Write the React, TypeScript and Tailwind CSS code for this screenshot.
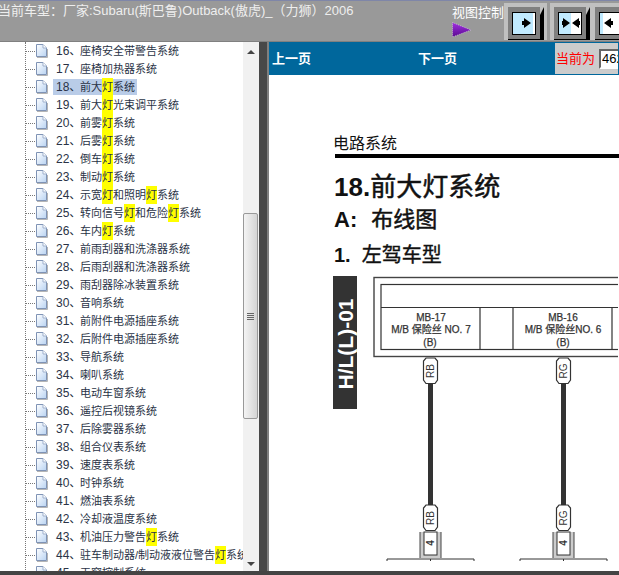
const cjk = "font-['Liberation_Sans','Noto_Sans_CJK_SC',sans-serif]";

const rows: [string, string][] = [
  ["16", "座椅安全带警告系统"],
  ["17", "座椅加热器系统"],
  ["18", "前大灯系统"],
  ["19", "前大灯光束调平系统"],
  ["20", "前雾灯系统"],
  ["21", "后雾灯系统"],
  ["22", "倒车灯系统"],
  ["23", "制动灯系统"],
  ["24", "示宽灯和照明灯系统"],
  ["25", "转向信号灯和危险灯系统"],
  ["26", "车内灯系统"],
  ["27", "前雨刮器和洗涤器系统"],
  ["28", "后雨刮器和洗涤器系统"],
  ["29", "雨刮器除冰装置系统"],
  ["30", "音响系统"],
  ["31", "前附件电源插座系统"],
  ["32", "后附件电源插座系统"],
  ["33", "导航系统"],
  ["34", "喇叭系统"],
  ["35", "电动车窗系统"],
  ["36", "遥控后视镜系统"],
  ["37", "后除雾器系统"],
  ["38", "组合仪表系统"],
  ["39", "速度表系统"],
  ["40", "时钟系统"],
  ["41", "燃油表系统"],
  ["42", "冷却液温度系统"],
  ["43", "机油压力警告灯系统"],
  ["44", "驻车制动器/制动液液位警告灯系统"],
  ["45", "天窗控制系统"],
];

function DocIcon() {
  return (
    <svg width="13" height="14" viewBox="0 0 13 14" className="shrink-0">
      <defs>
        <linearGradient id="doc" x1="0" y1="0" x2="1" y2="1">
          <stop offset="0" stopColor="#ffffff" />
          <stop offset="1" stopColor="#b9d3f2" />
        </linearGradient>
      </defs>
      <path d="M1.5 .5H8L11.5 4V12.5H1.5Z" fill="url(#doc)" stroke="#7f93b5" />
      <path d="M8 .5V4H11.5" fill="#fff" stroke="#9fb0cc" />
      <path d="M2 13.5H12.5V5" fill="none" stroke="#b5b5b5" />
    </svg>
  );
}

function Row({ num, label, active }: { num: string; label: string; active: boolean }) {
  const parts = label.split("灯");
  return (
    <div className="flex h-[18px] items-center whitespace-nowrap">
      <div className="w-[9px] shrink-0 border-t border-dotted border-[#777]" />
      <DocIcon />
      <div
        className={`ml-[5px] flex h-[16px] shrink-0 items-center pl-[3px] pr-[2px] text-[11px] text-[#2a3346] ${
          active ? "bg-[#b9cce8]" : ""
        }`}
      >
        <span className="w-[24px] text-[12px]">{num}、</span>
        {parts.map((p, i) => (
          <span key={i} className="flex items-center">
            {i > 0 && <span className="flex h-[18px] items-center bg-[#ffff00]">灯</span>}
            {p}
          </span>
        ))}
      </div>
    </div>
  );
}

function ScrollBar() {
  return (
    <div className="absolute top-0 right-0 bottom-0 flex w-[16px] flex-col bg-[#f1f1f1]">
      <div className="flex h-[17px] items-center justify-center pt-[3px]">
        <div className="h-0 w-0 border-x-[4px] border-b-[4px] border-x-transparent border-b-[#444]" />
      </div>
      <div className="mt-[154px] flex h-[206px] w-[15px] items-center justify-center rounded-[2px] border border-[#999] bg-gradient-to-r from-[#f4f4f4] to-[#d4d4d4]">
        <div className="flex flex-col gap-[1px]">
          <div className="h-[1px] w-[7px] bg-[#666]" />
          <div className="h-[1px] w-[7px] bg-[#666]" />
          <div className="h-[1px] w-[7px] bg-[#666]" />
          <div className="h-[1px] w-[7px] bg-[#666]" />
        </div>
      </div>
      <div className="flex flex-1 items-end justify-center pb-[5px]">
        <div className="h-0 w-0 border-x-[4px] border-t-[4px] border-x-transparent border-t-[#444]" />
      </div>
    </div>
  );
}

function ViewButton({ pad, split, arrows }: { pad: string; split: string; arrows: string }) {
  return (
    <div className={`mt-[2px] flex h-[37px] shrink-0 items-start bg-[#c0c0c0] pt-[4px] ${pad}`}>
      <div className="flex h-[33px] w-[32px] items-center justify-center border-b border-b-black bg-[#808080]">
        <div className="relative flex h-[23px] w-[24px] items-center justify-start border border-black bg-white">
          <div className={`absolute top-0 bottom-0 left-0 bg-[#c0eaff] ${split}`} />
          <svg width="22" height="10" viewBox="0 0 22 10" className="relative">
            <path d={arrows} fill="#000" />
          </svg>
        </div>
      </div>
      <svg width="4" height="33" viewBox="0 0 4 33" className="shrink-0">
        <path d="M0 8L4 0V33H0Z" fill="#000" />
      </svg>
    </div>
  );
}

function Connector({ x, code }: { x: number; code: string }) {
  const cx = x + 7.5;
  return (
    <g>
      <rect x={cx - 2.5} y="383" width="5" height="122" fill="#333" />
      {[358, 505].map((y) => (
        <g key={y}>
          <path
            d={`M${x + 3} ${y}H${x + 12}L${x + 14.5} ${y + 3}V${y + 22}L${x + 12} ${y + 25.5}H${x + 3}L${x + .5} ${y + 22}V${y + 3}Z`}
            fill="#fff"
            stroke="#333"
            strokeWidth="1.2"
          />
          <text
            transform={`translate(${cx + 3.5} ${y + 13}) rotate(-90)`}
            textAnchor="middle"
            fontSize="10"
            fill="#333"
            fontFamily="Liberation Sans"
          >
            {code}
          </text>
        </g>
      ))}
      <path d={`M${x - 3} 532V558H${x + 18}V532Z`} fill="#ccc" stroke="none" />
      <path d={`M${x - 3} 532V558M${x + 18} 532V558`} stroke="#444" strokeWidth="1" />
      <rect x={x + 1} y="532" width="13" height="23" fill="#fff" stroke="#333" />
      <text
        transform={`translate(${cx + 3.5} 543) rotate(-90)`}
        textAnchor="middle"
        fontSize="10"
        fontWeight="700"
        fill="#333"
        fontFamily="Liberation Sans"
      >
        4
      </text>
      <path d={`M${x - 36} 561V559H${x + 51}V561M${cx} 559V561`} fill="none" stroke="#333" strokeWidth="1" />
    </g>
  );
}

function Diagram() {
  const t = "Liberation Sans, Noto Sans CJK SC, sans-serif";
  return (
    <svg width="349" height="300" viewBox="270 271 349 300" className="block shrink-0">
      <rect x="334" y="276" width="24" height="133" fill="#333" />
      <text
        transform="translate(354 344) rotate(-90)"
        textAnchor="middle"
        fontSize="21"
        fontWeight="700"
        fill="#fff"
        fontFamily={t}
      >
        H/L(L)-01
      </text>
      <rect x="375" y="277.5" width="260" height="79" fill="#fff" stroke="#444" strokeWidth="1.4" />
      <rect x="382" y="284.5" width="250" height="65" fill="#fff" stroke="#333" strokeWidth="1.2" />
      <path d="M382 307.5H632M481 307.5V350M514 307.5V350M613 307.5V350" stroke="#333" strokeWidth="1.2" fill="none" />
      <g fontSize="10" fill="#333" stroke="#333" strokeWidth=".25" fontFamily={t} textAnchor="middle">
        <text x="432" y="320.5">MB-17</text>
        <text x="432" y="333">M/B 保险丝 NO. 7</text>
        <text x="431" y="346">(B)</text>
        <text x="564" y="320.5">MB-16</text>
        <text x="564" y="333">M/B 保险丝NO. 6</text>
        <text x="564" y="346">(B)</text>
      </g>
      <Connector x={424} code="RB" />
      <Connector x={557} code="RG" />
    </svg>
  );
}

export default function App() {
  return (
    <div className={`flex h-[575px] w-[619px] flex-col overflow-hidden bg-[#999] ${cjk}`}>
      <div className="flex h-[41px] shrink-0 items-start border-t border-[#7f86a8] bg-[#999]">
        <div className="-ml-[2px] mt-[1px] w-[454px] shrink-0 whitespace-nowrap text-[13px] leading-[17px] text-[#eeeeee]">
          当前车型：厂家:Subaru(斯巴鲁)Outback(傲虎)_（力狮）2006
        </div>
        <div className="flex shrink-0">
          <div className="w-[52px] shrink-0 pt-[4px] text-[13px] leading-[16px] text-white">
            视图控制
            <svg width="20" height="16" viewBox="0 0 20 16" className="mt-[1px] block">
              <defs>
                <linearGradient id="tri" x1="0" y1="0" x2="0" y2="1">
                  <stop offset="0" stopColor="#a030e0" />
                  <stop offset="1" stopColor="#5a0a90" />
                </linearGradient>
              </defs>
              <path d="M.5 .5L19 8L.5 15Z" fill="url(#tri)" stroke="#e8e0f0" strokeWidth=".6" strokeDasharray="1 1" />
            </svg>
          </div>
          <ViewButton pad="pl-[4px] pr-[3px] mr-[3px]" split="w-[20px]" arrows="M9 3H11V0L18 5L11 10V7H9Z" />
          <ViewButton pad="pl-[4px]" split="w-[12px]" arrows="M3 3H4V0L11 5L4 10V7H3ZM21 3H20V0L13 5L20 10V7H21Z" />
          <ViewButton pad="pl-[5px]" split="w-[3px]" arrows="M13 3H11V0L4 5L11 10V7H13Z" />
        </div>
      </div>
      <div className="flex min-h-0 flex-1 border-t border-[#808080]">
        <div className="relative w-[259px] shrink-0 overflow-hidden bg-white">
          <div className="ml-[25px] border-l border-dotted border-[#777]">
            {rows.map(([n, l]) => (
              <Row key={n} num={n} label={l} active={n === "18"} />
            ))}
          </div>
          <ScrollBar />
        </div>
        <div className="w-[10px] shrink-0 border-r-2 border-[#808080] bg-[#484848]" />
        <div className="flex min-w-0 flex-1 flex-col bg-white">
          <div className="flex h-[33px] shrink-0 items-center bg-[#00679c] text-[13px] font-bold text-white">
            <span className="ml-[3px] w-[146px] shrink-0">上一页</span>
            <span className="w-[137px] shrink-0">下一页</span>
            <div className="flex h-[31px] w-[63px] shrink-0 items-center overflow-hidden bg-[#cccccc] pl-[1px]">
              <span className="shrink-0 whitespace-nowrap text-[13px] font-normal text-[#ff0000]">当前为</span>
              <input
                readOnly
                value="462"
                className="ml-[4px] h-[20px] w-[60px] shrink-0 border-2 border-t-[#666] border-r-white border-b-white border-l-[#666] bg-white pl-[1px] text-[13px] font-normal text-black"
              />
            </div>
          </div>
          <div className="flex flex-col overflow-hidden">
            <div className="ml-[64px] mt-[59px] text-[16px] leading-[20px] text-[#111]">电路系统</div>
            <div className="ml-[66px] h-[4px] bg-black" />
            <div className="ml-[65px] mt-[13px] whitespace-nowrap text-[26px] font-bold leading-[32px] text-[#111]">
              18.<span className="font-normal [-webkit-text-stroke:0.5px_#111]">前大灯系统</span>
            </div>
            <div className="ml-[65px] mt-[2px] whitespace-nowrap text-[22px] font-bold leading-[30px] text-[#111]">
              A:<span className="ml-[14px] font-normal [-webkit-text-stroke:0.5px_#111]">布线图</span>
            </div>
            <div className="ml-[65px] mt-[6px] whitespace-nowrap text-[20px] font-bold leading-[28px] text-[#111]">
              1.<span className="ml-[11px] font-normal [-webkit-text-stroke:0.4px_#111]">左驾车型</span>
            </div>
            <div className="mt-[2px]">
              <Diagram />
            </div>
          </div>
        </div>
      </div>
      <div className="h-[4px] shrink-0 bg-[#444]" />
    </div>
  );
}
